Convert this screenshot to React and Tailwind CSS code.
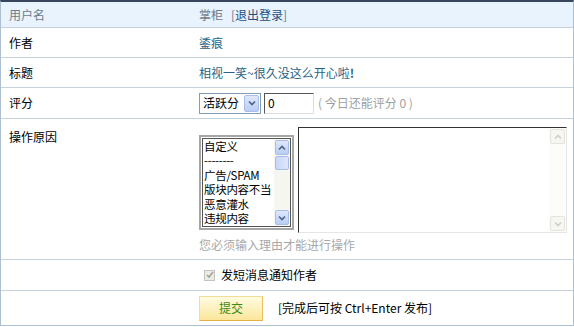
import React from 'react';

const font = { fontFamily: '"Noto Sans CJK SC", "Liberation Sans", sans-serif' };

const ArrowBtn = ({ dir = 'down', disabled = false, className = '' }) => (
  <div
    className={`flex items-center justify-center border ${
      disabled ? 'border-[#e4e4dc] bg-[#f7f7f2]' : 'border-[#a9bde6] bg-gradient-to-b from-[#dfe8fb] to-[#b9cdf4]'
    } rounded-[2px] ${className}`}
  >
    <svg width="8" height="6" viewBox="0 0 8 6">
      <path
        d={dir === 'down' ? 'M1 1.5l3 3 3-3' : 'M1 4.5l3-3 3 3'}
        fill="none"
        stroke={disabled ? '#cfcfc6' : '#4d6185'}
        strokeWidth="1.6"
      />
    </svg>
  </div>
);

const Row = ({ label, h, head, children, top = 'items-center', labelPad = '' }) => (
  <div className={`grid grid-cols-[198px_1fr] ${top} border-b border-[#c5d3df] ${h} ${head ? 'bg-[#e8f3fd]' : 'bg-white'}`}>
    <div className={`pl-2 ${labelPad} ${head ? 'text-[#6b7b8c]' : 'text-black'}`}>{label}</div>
    <div>{children}</div>
  </div>
);

export default function App() {
  const reasons = ['自定义', '--------', '广告/SPAM', '版块内容不当', '恶意灌水', '违规内容'];
  return (
    <div className="w-[574px] h-[327px] bg-white text-[12px] leading-[14px]" style={font}>
      <div className="border-t-2 border-t-[#3a4660] border-x border-x-[#aebfd0] border-b border-b-[#aebfd0]">
        <Row label="用户名" h="h-[26px]" head>
          <span className="text-[#6b7b8c]">掌柜</span>
          <span className="ml-2 text-[#6b7b8c]">[</span>
          <span className="text-[#1f4f7f]">退出登录</span>
          <span className="text-[#6b7b8c]">]</span>
        </Row>
        <Row label="作者" h="h-[30px]">
          <span className="text-[#2a6383]">鋈痕</span>
        </Row>
        <Row label="标题" h="h-[30px]">
          <span className="text-[#2a6383]">相视一笑~很久没这么开心啦<b>!</b></span>
        </Row>
        <Row label="评分" h="h-[31px]">
          <div className="flex items-center">
            <div className="flex items-center w-[62px] h-[21px] border border-[#7f9db9] bg-white pl-[3px] pr-[1px]">
              <span className="flex-1 text-black">活跃分</span>
              <ArrowBtn className="w-[15px] h-[17px]" />
            </div>
            <div className="ml-[3px] w-[50px] h-[21px] border border-t-[#555] border-l-[#555] border-r-[#ddd] border-b-[#ddd] pl-[3px] flex items-center text-black">
              0
            </div>
            <span className="ml-[4px] text-[#a0a0a0]">( 今日还能评分 0 )</span>
          </div>
        </Row>
        <Row label="操作原因" h="h-[141px]" top="items-start" labelPad="pt-[11px]">
          <div className="pt-[8px]">
            <div className="flex items-start gap-[4px]">
              <div className="mt-[8px] w-[95px] h-[95px] border-2 border-[#a6a6a6] p-[1px] flex bg-white">
                <div className="flex-1 border border-[#555] flex overflow-hidden">
                  <div className="flex-1 min-w-0 overflow-hidden pl-[1px] text-black leading-[14.4px] text-[11.5px] tracking-[-0.3px] whitespace-nowrap">
                    {reasons.map((r) => (
                      <div key={r}>{r}</div>
                    ))}
                  </div>
                  <div className="w-[16px] shrink-0 bg-[#f6f6f0] flex flex-col p-[1px] gap-[1px]">
                    <ArrowBtn dir="up" className="h-[15px]" />
                    <div className="h-[14px] border border-[#a9bde6] rounded-[2px] bg-gradient-to-r from-[#c8d7f7] to-[#dde7fb]" />
                    <div className="flex-1" />
                    <ArrowBtn className="h-[15px]" />
                  </div>
                </div>
              </div>
              <div className="w-[269px] h-[106px] border border-t-[#333] border-l-[#333] border-r-[#e6e6e6] border-b-[#e6e6e6] bg-white flex justify-end">
                <div className="w-[17px] bg-[#fcfcf9] flex flex-col p-[1px]">
                  <ArrowBtn dir="up" disabled className="h-[15px]" />
                  <div className="flex-1" />
                  <ArrowBtn disabled className="h-[15px]" />
                </div>
              </div>
            </div>
            <div className="mt-[5px] text-[#a8a8a8]">您必须输入理由才能进行操作</div>
          </div>
        </Row>
        <Row label="" h="h-[31px]">
          <div className="flex items-center pl-[5px]">
            <div className="w-[11px] h-[11px] border border-[#c4c4bc] bg-[#ecece6] flex items-center justify-center">
              <svg width="8" height="8" viewBox="0 0 8 8">
                <path d="M1 4l2 2 4-5" fill="none" stroke="#a3a39a" strokeWidth="1.6" />
              </svg>
            </div>
            <span className="ml-[6px] text-black">发短消息通知作者</span>
          </div>
        </Row>
        <div className="grid grid-cols-[198px_1fr] items-center h-[34px] bg-white">
          <div />
          <div className="flex items-center">
            <button
              className="w-[64px] h-[25px] border border-[#f1dc98] border-b-[#e0b34a] border-r-[#e7c060] bg-gradient-to-b from-[#fffbe0] to-[#fbe69a] text-[#3b8a16] text-[12px]"
              style={font}
            >
              提交
            </button>
            <span className="ml-[15px] text-black">[完成后可按 Ctrl+Enter 发布]</span>
          </div>
        </div>
      </div>
    </div>
  );
}
